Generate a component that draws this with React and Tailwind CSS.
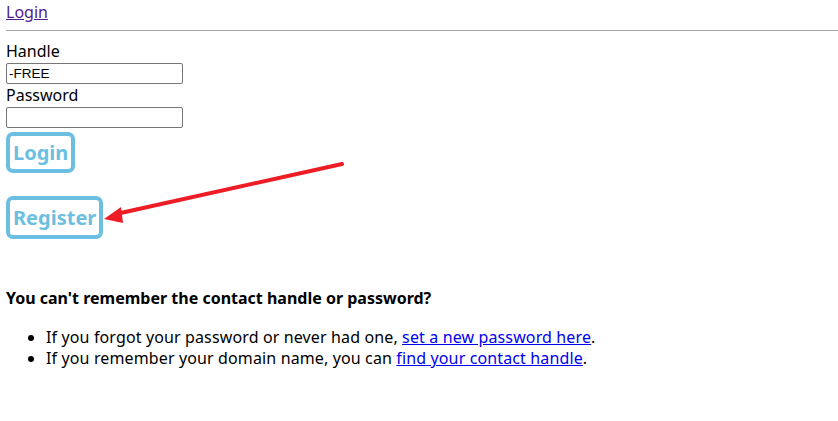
export default function App() {
  return (
    <div className="relative w-[838px] h-[421px] bg-white text-black text-[16px] leading-[21px] px-[6px] pt-[2px]" style={{ fontFamily: '"Noto Sans", sans-serif' }}>
      <a href="#" className="text-[#551a8b] underline">Login</a>
      <hr className="mt-[7px] mb-[9px] border-t border-[#a0a0a0] -mr-[6px]" />
      <div className="leading-[23px]">Handle</div>
      <div className="w-[177px] h-[21px] border border-[#767676] rounded-[2px] text-[13.5px] leading-[19px] px-[2px]" style={{ fontFamily: '"Liberation Sans", sans-serif' }}>-FREE</div>
      <div className="leading-[23px]">Password</div>
      <div className="w-[177px] h-[21px] border border-[#767676] rounded-[2px]"></div>
      <div className="mt-[4px] inline-block border-[4px] border-[#6cbfe0] rounded-[7px] px-[3px] h-[41px] text-[20px] leading-[33px] font-bold text-[#6cbfe0]">Login</div>
      <div />
      <div className="mt-[23px] inline-block border-[4px] border-[#6cbfe0] rounded-[7px] px-[3px] h-[43px] text-[20px] leading-[35px] font-bold text-[#6cbfe0]">Register</div>
      <div className="mt-[49px] font-bold">You can't remember the contact handle or password?</div>
      <ul className="mt-[18px] list-disc pl-[40px] tracking-[0.13px]">
        <li>If you forgot your password or never had one, <a href="#" className="text-[#0000ee] underline">set a new password here</a>.</li>
        <li>If you remember your domain name, you can <a href="#" className="text-[#0000ee] underline">find your contact handle</a>.</li>
      </ul>
      <svg className="absolute left-0 top-0 pointer-events-none" width="838" height="421">
        <line x1="342" y1="164" x2="116" y2="214" stroke="#ee1c25" strokeWidth="4" strokeLinecap="round" />
        <polygon points="104,219 121,207 123,223" fill="#ee1c25" />
      </svg>
    </div>
  );
}
